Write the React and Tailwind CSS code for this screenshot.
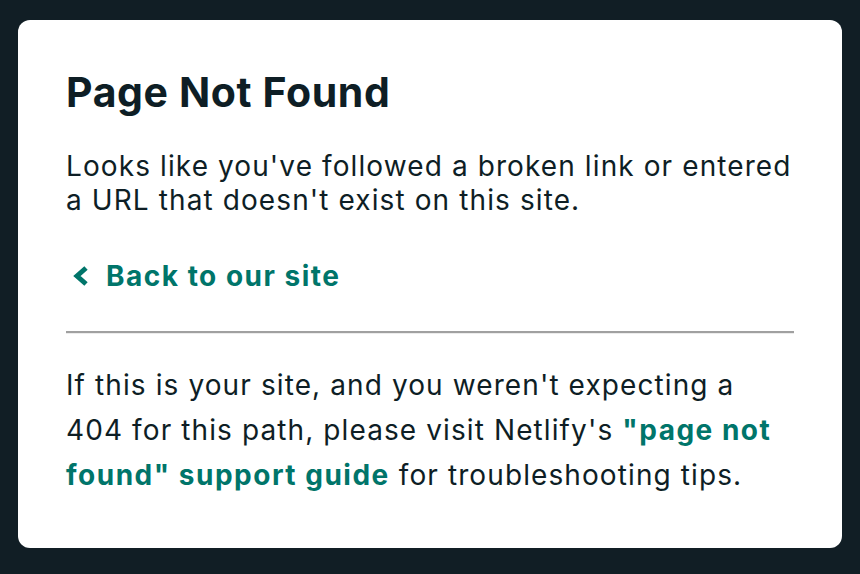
import React from "react";

export default function App() {
  return (
    <div
      className="min-h-[574px] w-full bg-[#111e25] px-[18px] pt-[20px] pb-[26px]"
      style={{ fontFamily: "Inter, 'Noto Sans', sans-serif" }}
    >
      <div className="flex h-[528px] flex-col rounded-[12px] bg-white px-[48px] pt-[48px] text-[#0e1e25]">
        <h1 className="text-[41px] font-bold leading-[48px] tracking-[0.6px]">
          Page Not Found
        </h1>
        <p className="mt-[33px] w-[732px] text-[28px] leading-[34px] tracking-[1.1px]">
          Looks like you've followed a broken link or entered a URL that doesn't exist on this site.
        </p>
        <p className="mt-[42px] text-[28px] leading-[34px]">
          <a href="#" className="flex items-center font-bold tracking-[1.5px] text-[#00756a]">
            <svg
              width="17"
              height="22"
              viewBox="0 0 17 22"
              className="ml-[6px] mr-[17px]"
              fill="none"
              stroke="#00756a"
              strokeWidth="5"
              strokeLinecap="butt"
              strokeLinejoin="miter"
            >
              <polyline points="14,3 5,11 14,19" />
            </svg>
            Back to our site
          </a>
        </p>
        <hr className="mt-[38px] border-0 border-t-2 border-b border-t-[#a0a0a0] border-b-[#ececec]" />
        <p className="mt-[29px] w-[720px] text-[28px] leading-[45px] tracking-[1.1px]">
          If this is your site, and you weren't expecting a 404 for this path, please visit Netlify's{" "}
          <a href="#" className="font-bold tracking-[1.5px] text-[#00756a]">
            "page not found" support guide
          </a>{" "}
          for troubleshooting tips.
        </p>
      </div>
    </div>
  );
}
